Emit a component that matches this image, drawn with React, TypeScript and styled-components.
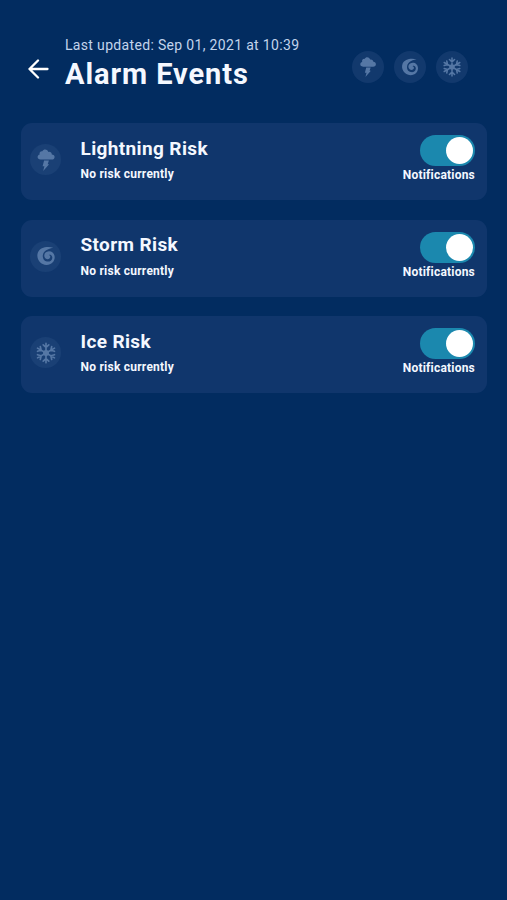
import React, { useState } from "react";
import styled, { createGlobalStyle } from "styled-components";

const GlobalStyle = createGlobalStyle`
  * { box-sizing: border-box; }
  body {
    margin: 0;
    background: #022c60;
    font-family: Roboto, "Noto Sans", sans-serif;
    color: #f4f8ff;
  }
`;

const Page = styled.main`
  min-height: 900px;
  padding: 36px 20px 0 21px;
`;

const Header = styled.header`
  display: flex;
  height: 87px;
  align-items: flex-start;
`;

const BackButton = styled.button`
  width: 34px;
  height: 34px;
  margin: 16px 10px 0 0;
  padding: 7px;
  border: 0;
  background: none;
  color: #fff;
  line-height: 0;
`;

const Heading = styled.div`
  flex: 1;
  white-space: nowrap;
`;

const Updated = styled.div`
  height: 18px;
  font-size: 14px;
  line-height: 18px;
  letter-spacing: 0.33px;
  color: #c3d4ec;
`;

const Title = styled.h1`
  margin: 2px 0 0;
  font-size: 29px;
  font-weight: 700;
  line-height: 36px;
  letter-spacing: 0.93px;
`;

const Badges = styled.div`
  display: flex;
  gap: 10px;
  margin: 15px 19.5px 0 0;
`;

const Disc = styled.span<{ $compact?: boolean }>`
  display: flex;
  flex: none;
  align-items: center;
  justify-content: center;
  width: ${(p) => (p.$compact ? 32 : 31)}px;
  height: ${(p) => (p.$compact ? 32 : 31)}px;
  border-radius: 50%;
  background: ${(p) => (p.$compact ? "#12396d" : "#1a4075")};
  color: #5577a5;

  svg {
    transform: scale(${(p) => (p.$compact ? 0.92 : 1)});
  }
`;

const List = styled.section`
  display: grid;
  gap: 19.5px;
`;

const Card = styled.article`
  display: flex;
  height: 77px;
  padding: 0 12px 0 9px;
  border-radius: 11px;
  background: #10366c;
`;

const IconSlot = styled.div`
  width: 50.5px;
  padding-top: 21px;
`;

const Details = styled.div`
  flex: 1;
  padding-top: 13.5px;
  white-space: nowrap;
`;

const CardTitle = styled.h2`
  margin: 0;
  font-size: 19px;
  font-weight: 700;
  line-height: 24px;
  letter-spacing: 0.37px;
`;

const Status = styled.p`
  margin: 5.5px 0 0;
  font-size: 12px;
  font-weight: 700;
  line-height: 16px;
  letter-spacing: 0.24px;
`;

const Control = styled.div`
  display: flex;
  flex-direction: column;
  align-items: flex-end;
  padding-top: 12px;
`;

const Toggle = styled.button<{ $on: boolean }>`
  display: flex;
  justify-content: ${(p) => (p.$on ? "flex-end" : "flex-start")};
  align-items: center;
  width: 55px;
  height: 31px;
  padding: 0 2px;
  border: 0;
  border-radius: 16px;
  background: ${(p) => (p.$on ? "#1b88ae" : "#395a88")};
`;

const Knob = styled.span`
  width: 27px;
  height: 27px;
  border-radius: 50%;
  background: #fff;
`;

const ControlLabel = styled.span`
  margin-top: 1px;
  font-size: 12px;
  font-weight: 700;
  line-height: 16px;
  letter-spacing: 0.21px;
  white-space: nowrap;
`;

const Lightning = () => (
  <svg width="20" height="24" viewBox="0 0 20 24" fill="currentColor">
    <path d="M4.6 11.6C2.8 11.6 1.6 10.5 1.6 9.1C1.6 7.8 2.4 6.8 3.7 6.5C2.9 4.4 4.6 2.8 6.4 3.2C7.4 .9 11.2.7 12.3 3.9C14.4 3.5 15.8 4.8 15.8 6.4C17.6 6.4 18.6 7.5 18.6 8.9C18.6 10.5 17.4 11.6 15.6 11.6Z" />
    <path d="M8.1 12.6H12.9L11.7 16.2H13.1L7.2 23L8.4 18.2H6.6Z" />
  </svg>
);

const Storm = () => (
  <svg width="20" height="20" viewBox="0 0 20 20" fill="currentColor">
    <path d="M17.2 1.7C11 .1 4 1.4 1.9 6.5C-.2 11.9 3.8 18.9 10.5 18.9C15.7 18.9 18.8 15.1 18.7 11.1C18.6 7.4 15.9 5.2 12.9 5.3C9.7 5.4 7.8 7.8 8.4 10.5C9 13 11.8 13.9 13.5 12.5C14.8 11.4 14.5 9.5 12.8 9.1C14.1 8.1 16.5 9.4 16.3 11.9C16.1 14.5 13.6 16 11 15.5C7.8 15 6.3 12 6.9 8.9C7.5 5.5 10.7 3 17.2 1.7Z" />
  </svg>
);

const Snowflake = () => (
  <svg width="22" height="22" viewBox="0 0 22 22" fill="none" stroke="currentColor" strokeWidth="1.65" strokeLinecap="round">
    {[0, 60, 120, 180, 240, 300].map((angle) => (
      <path key={angle} transform={`rotate(${angle} 11 11)`} d="M11 11V1.2M8.2 2.8L11 5.4L13.8 2.8" />
    ))}
    <circle cx="11" cy="11" r="3" fill="currentColor" stroke="none" />
  </svg>
);

const events = [
  { name: "Lightning Risk", Icon: Lightning },
  { name: "Storm Risk", Icon: Storm },
  { name: "Ice Risk", Icon: Snowflake },
];

function AlarmCard({ name, Icon }: { name: string; Icon: React.ComponentType }) {
  const [enabled, setEnabled] = useState(true);
  return (
    <Card>
      <IconSlot>
        <Disc><Icon /></Disc>
      </IconSlot>
      <Details>
        <CardTitle>{name}</CardTitle>
        <Status>No risk currently</Status>
      </Details>
      <Control>
        <Toggle
          $on={enabled}
          role="switch"
          aria-checked={enabled}
          aria-label={`${name} notifications`}
          onClick={() => setEnabled(!enabled)}
        >
          <Knob />
        </Toggle>
        <ControlLabel>Notifications</ControlLabel>
      </Control>
    </Card>
  );
}

export default function App() {
  return (
    <Page>
      <GlobalStyle />
      <Header>
        <BackButton aria-label="Back">
          <svg width="21" height="20" viewBox="0 0 21 20" fill="none" stroke="currentColor" strokeWidth="2.3" strokeLinecap="round" strokeLinejoin="round">
            <path d="M19.5 10H1.5M10 1.5L1.5 10L10 18.5" />
          </svg>
        </BackButton>
        <Heading>
          <Updated>Last updated: Sep 01, 2021 at 10:39</Updated>
          <Title>Alarm Events</Title>
        </Heading>
        <Badges>
          {events.map(({ name, Icon }) => (
            <Disc key={name} $compact><Icon /></Disc>
          ))}
        </Badges>
      </Header>
      <List>
        {events.map((event) => <AlarmCard key={event.name} {...event} />)}
      </List>
    </Page>
  );
}
